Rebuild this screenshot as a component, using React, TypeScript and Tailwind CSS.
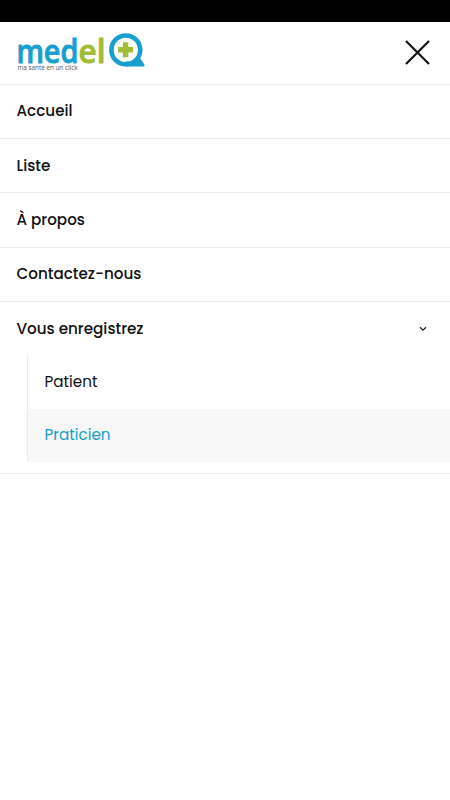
import {clsx} from "clsx"

const links = ["Accueil", "Liste", "À propos", "Contactez-nous"]

const subLinks = [
  {label: "Patient", active: false},
  {label: "Praticien", active: true},
]

function Logo() {
  return (
    <svg width="132" height="44" viewBox="16 32 132 44" className="block overflow-visible">
      {/* Wordmark */}
      <g fontFamily="'Open Sans', sans-serif" fontSize="33" fontWeight="600" strokeWidth="0.9">
        <text x="16.4" y="64" fill="#189fcf" stroke="#189fcf" textLength="62" lengthAdjust="spacingAndGlyphs">
          med
        </text>
        <text x="78.6" y="64" fill="#a1bd36" stroke="#a1bd36" textLength="27" lengthAdjust="spacingAndGlyphs">
          el
        </text>
      </g>
      <text
        x="17.5"
        y="71"
        fill="#555555"
        fontFamily="'Open Sans', sans-serif"
        fontSize="7.4"
        textLength="60"
        lengthAdjust="spacingAndGlyphs">
        ma santé en un click
      </text>
      {/* Speech bubble */}
      <circle cx="125.8" cy="50.9" r="14.4" fill="none" stroke="#189fcf" strokeWidth="4.6" />
      <path d="M125.8 67.5H143.6Q145.4 67 144.3 65.5L140 58.8L134 62.5H125.8Z" fill="#189fcf" />
      <path d="M125.6 43.2v15M118.1 50.7h15" stroke="#a1bd36" strokeWidth="5.4" />
    </svg>
  )
}

export default function App() {
  return (
    <div className="min-h-screen bg-white font-['Poppins','Inter',sans-serif] text-[15.2px] text-[#111111]">
      <div className="h-[22px] bg-black" />

      <header className="flex h-[62.5px] items-center justify-between border-b border-[#ebebeb] pr-5 pl-4">
        <Logo />
        <button type="button" aria-label="Fermer" className="block">
          <svg width="25" height="25" viewBox="0 0 25 25" className="block">
            <path d="M1 1l23 23M24 1L1 24" stroke="#111111" strokeWidth="2.2" />
          </svg>
        </button>
      </header>

      <nav>
        {links.map((label) => (
          <a
            key={label}
            href="#"
            className="flex h-[54.4px] items-center border-b border-[#ebebeb] pt-px pl-[16.5px] font-medium">
            {label}
          </a>
        ))}

        <div className="border-b border-[#ebebeb] pb-[11px]">
          <a href="#" className="flex h-[54px] items-center justify-between pr-[23px] pl-[16.5px] font-medium">
            Vous enregistrez
            <svg width="8" height="6" viewBox="0 0 8 6" fill="none">
              <path d="M1 1.2l3 3 3-3" stroke="#222222" strokeWidth="1.3" />
            </svg>
          </a>
          <div className="ml-[27px] border-l border-[#ebebeb]">
            {subLinks.map((link) => (
              <a
                key={link.label}
                href="#"
                className={clsx(
                  "flex h-[53px] items-center pl-[16.5px]",
                  link.active && "bg-[#f8f8f8] text-[#169fc9]",
                )}>
                {link.label}
              </a>
            ))}
          </div>
        </div>
      </nav>
    </div>
  )
}
